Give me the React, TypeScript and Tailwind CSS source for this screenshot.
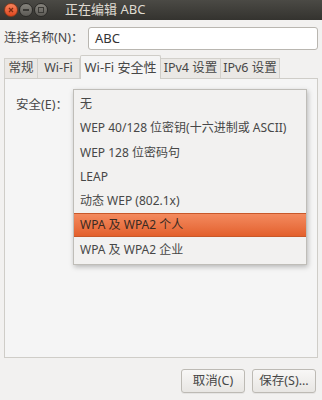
const font = { fontFamily: '"Noto Sans", "Noto Sans CJK SC", sans-serif' };

const options = [
  "无",
  "WEP 40/128 位密钥(十六进制或 ASCII)",
  "WEP 128 位密码句",
  "LEAP",
  "动态 WEP (802.1x)",
  "WPA 及 WPA2 个人",
  "WPA 及 WPA2 企业",
];

function TitleButton({ kind }: { kind: "close" | "min" | "max" }) {
  if (kind === "close") {
    return (
      <div className="flex h-[14px] w-[14px] items-center justify-center rounded-full border border-[#8a3a1c] bg-gradient-to-b from-[#f7825a] to-[#e0461c]">
        <svg width="6" height="6" viewBox="0 0 6 6">
          <path d="M1 1L5 5M5 1L1 5" stroke="#7a2a10" strokeWidth="1.3" />
        </svg>
      </div>
    );
  }
  return (
    <div className="flex h-[14px] w-[14px] items-center justify-center rounded-full border border-[#2a2926] bg-gradient-to-b from-[#86847d] to-[#5c5a55]">
      {kind === "min" ? (
        <div className="h-[2px] w-[6px] bg-[#3a3935]" />
      ) : (
        <div className="h-[6px] w-[6px] border border-[#3a3935]" />
      )}
    </div>
  );
}

export default function App() {
  return (
    <div
      className="relative flex h-[400px] w-[322px] flex-col overflow-hidden bg-[#f2f1f0] text-[12.5px] text-[#474747]"
      style={font}
    >
      <div className="flex h-[20px] items-center gap-[1px] bg-gradient-to-b from-[#4b4a45] to-[#34332f] pl-[4px]">
        <TitleButton kind="close" />
        <TitleButton kind="min" />
        <TitleButton kind="max" />
        <span className="ml-[16px] text-[13px] text-[#dfdbd2]">正在编辑 ABC</span>
      </div>

      <div className="flex items-center px-[4px] pt-[7px]">
        <span className="w-[84px]">连接名称(N)：</span>
        <div className="flex h-[23px] flex-1 items-center rounded-[3px] border border-[#b9b6b0] bg-white px-[6px] text-[13px] text-[#333]">
          ABC
        </div>
      </div>

      <div className="mt-[5px] flex h-[23px] items-end px-[4px]">
        <div className="flex h-[20px] w-[34px] items-center justify-center border-l border-r border-t border-[#d3d1cc] bg-[#eae8e5]">常规</div>
        <div className="flex h-[20px] w-[42px] items-center justify-center border-r border-t border-[#d3d1cc] bg-[#eae8e5]">Wi-Fi</div>
        <div className="relative z-10 -mb-[1px] flex h-[24px] w-[81px] items-center justify-center rounded-t-[2px] border-l border-r border-t border-[#cfcdc8] bg-[#f5f5f5] text-[13px]">
          Wi-Fi 安全性
        </div>
        <div className="flex h-[20px] w-[60px] items-center justify-center border-r border-t border-[#d3d1cc] bg-[#eae8e5]">IPv4 设置</div>
        <div className="flex h-[20px] w-[59px] items-center justify-center border-r border-t border-[#d3d1cc] bg-[#eae8e5]">IPv6 设置</div>
      </div>

      <div className="mx-[4px] h-[280px] border border-[#cfcdc8] bg-[#f5f5f5] pl-[11px] pt-[17px]">
        <span>安全(E)：</span>
      </div>

      <div className="flex flex-1 items-center justify-end gap-[7px] pr-[6px] pt-[4px]">
        <button className="h-[24px] w-[64px] rounded-[3px] border border-[#bdbab4] bg-gradient-to-b from-[#f8f7f6] to-[#e8e6e3] text-[12.5px] text-[#474747] shadow-[0_1px_0_rgba(0,0,0,0.05)]">
          取消(C)
        </button>
        <button className="h-[24px] w-[64px] rounded-[3px] border border-[#bdbab4] bg-gradient-to-b from-[#f8f7f6] to-[#e8e6e3] text-[12.5px] text-[#474747] shadow-[0_1px_0_rgba(0,0,0,0.05)]">
          保存(S)...
        </button>
      </div>

      <div className="absolute left-[73px] top-[89px] z-20 flex w-[234px] flex-col border border-[#bfbdb8] bg-[#f2f1f0] py-[2px] text-[12px] shadow-[1px_2px_5px_rgba(0,0,0,0.25)]">
        {options.map((o, i) =>
          i === 5 ? (
            <div
              key={o}
              className="flex h-[24px] items-center border-y border-[#c8582a] bg-gradient-to-b from-[#f38a5e] to-[#e3602c] pl-[6px] text-[#3a2a22]"
            >
              {o}
            </div>
          ) : (
            <div key={o} className="flex h-[24.3px] items-center pl-[6px]">
              {o}
            </div>
          )
        )}
      </div>
    </div>
  );
}
